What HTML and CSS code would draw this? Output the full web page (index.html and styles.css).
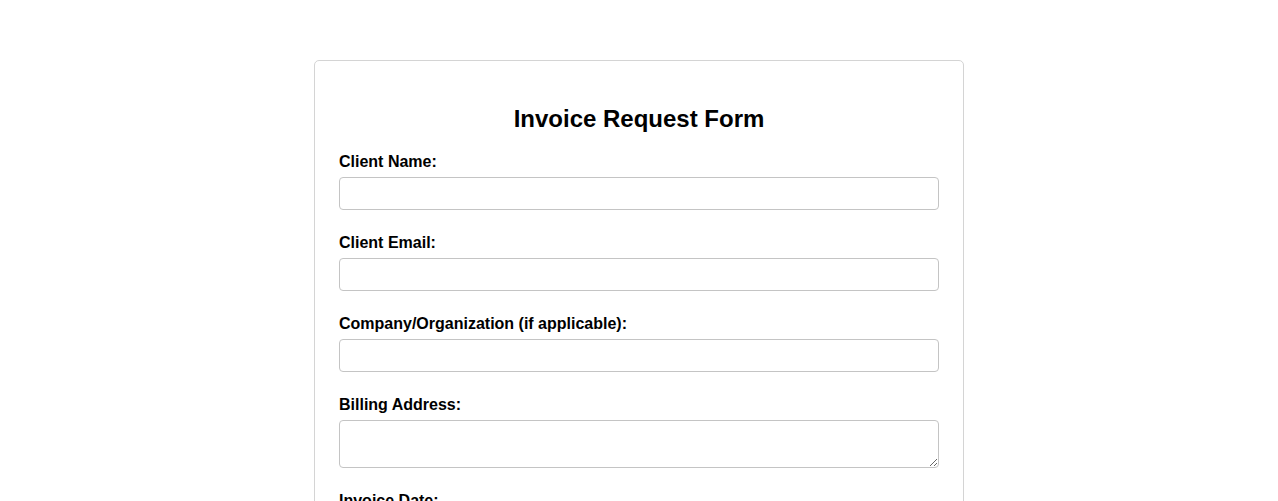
FILE: index.html
```html
<!DOCTYPE html>
<html lang="en">
<head>
<meta charset="utf-8">
<title>Invoice Request Form</title>
<link rel="stylesheet" href="styles.css">
</head>
<body>
  <div class="card">
    <h2 class="card-title">Invoice Request Form</h2>
    <form class="invoice-form">
      <div class="field">
        <label for="client-name">Client Name:</label>
        <input id="client-name" type="text">
      </div>
      <div class="field">
        <label for="client-email">Client Email:</label>
        <input id="client-email" type="email">
      </div>
      <div class="field">
        <label for="company">Company/Organization (if applicable):</label>
        <input id="company" type="text">
      </div>
      <div class="field">
        <label for="billing">Billing Address:</label>
        <textarea id="billing"></textarea>
      </div>
      <div class="field">
        <label for="invoice-date">Invoice Date:</label>
        <input id="invoice-date" type="date">
      </div>
    </form>
  </div>
</body>
</html>
```
FILE: styles.css
```css
html, body {
  margin: 0;
  padding: 0;
  background: #ffffff;
  font-family: "Liberation Sans", Arial, sans-serif;
  color: #000;
}

.card {
  box-sizing: border-box;
  width: 650px;
  margin: 60px auto 40px;
  padding: 24px;
  border: 1px solid #d4d4d4;
  border-radius: 5px;
  background: #fff;
}

.card-title {
  margin: 20px 0;
  font-size: 24px;
  line-height: 28px;
  font-weight: bold;
  text-align: center;
}

.field {
  margin-bottom: 24px;
}

.field label {
  display: block;
  margin-bottom: 6px;
  font-size: 16px;
  line-height: 18px;
  font-weight: bold;
}

.field input,
.field textarea {
  display: block;
  box-sizing: border-box;
  width: 100%;
  margin: 0;
  padding: 8px;
  font-family: "Liberation Sans", Arial, sans-serif;
  font-size: 13.33px;
  border: 1px solid #c4c4c4;
  border-radius: 4px;
  background: #fff;
}

.field input {
  height: 33px;
}

.field textarea {
  height: 48px;
  resize: vertical;
}
```
